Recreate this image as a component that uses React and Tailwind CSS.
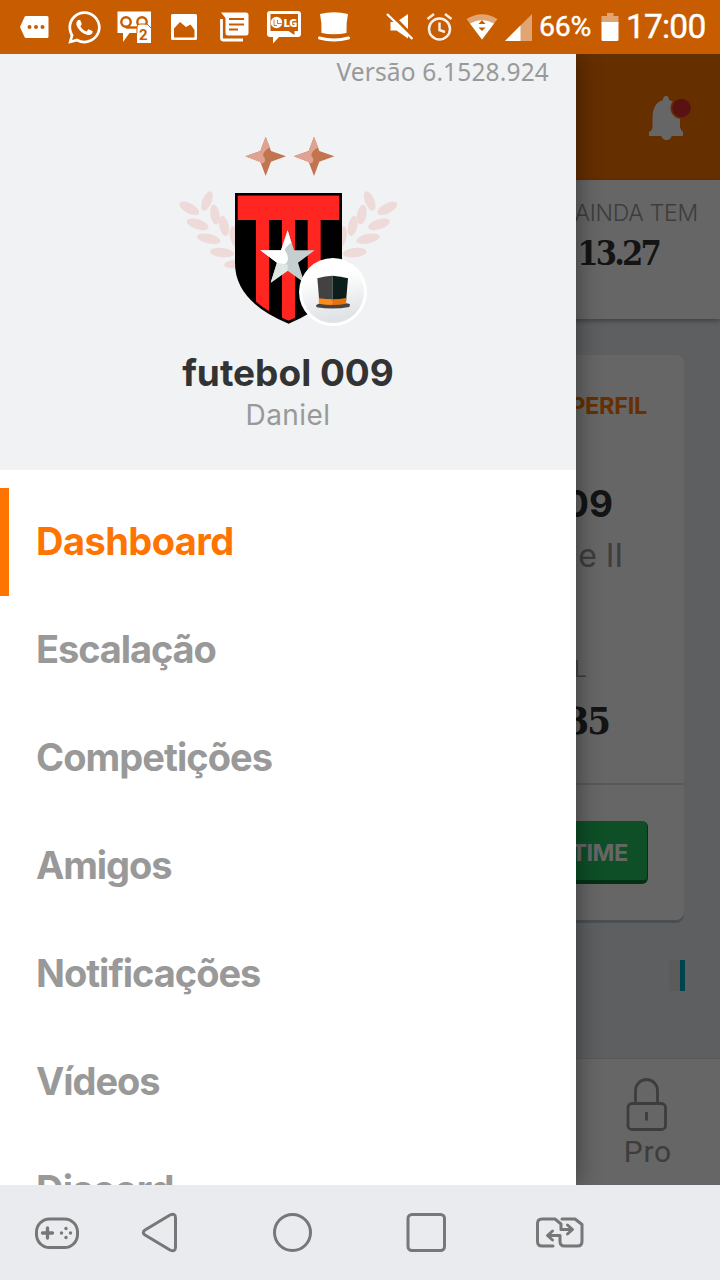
import { FaWhatsapp } from "react-icons/fa";

const ui = "font-['Inter','Liberation_Sans',sans-serif]";

function Glyph({ x, w, y = 0, h = 54, className = "", children }) {
  return (
    <svg width={w} height={h} viewBox={`${x} ${y} ${w} ${h}`} className={`block shrink-0 ${className}`} fill="#fff">
      {children}
    </svg>
  );
}

function StatusBar() {
  return (
    <div className="flex h-[54px] shrink-0 items-center overflow-hidden bg-[#c85c00] pl-5 font-[Roboto,sans-serif] text-white">
      <Glyph x={20} w={29}>
        <path fillRule="evenodd" d="M26 16h21q1.500 0 1.500 1.500v19q0 1.500-1.500 1.500H26q-1 0-1.500-1L20 27l4.500-10q.5-1 1.500-1zM29.500 25a2 2 0 100 4 2 2 0 000-4zm6.500 0a2 2 0 100 4 2 2 0 000-4zm6.500 0a2 2 0 100 4 2 2 0 000-4z" />
      </Glyph>
      <FaWhatsapp className="ml-[17px] size-[37px] shrink-0" />
      <Glyph x={117} w={35} className="ml-[14px]">
        <path d="M117.500 11.500h33.500V43h-14V33h-7.500L123 42v-9h-5.500z" />
        <g fill="none" stroke="#c85c00" strokeWidth="2.400">
          <circle cx="126" cy="22" r="4.700" />
          <circle cx="142" cy="22" r="4.700" />
          <path d="M126 27.500h11" />
        </g>
        <path d="M139 24.500h8l4 4V43h-14V26.500q0-2 2-2z" />
        <path d="M137 33V27q0-3 3-3h7l4 4" fill="none" stroke="#c85c00" strokeWidth="1" />
        <text x="139" y="39.500" fontSize="15" fontWeight="700" fill="#c85c00">2</text>
      </Glyph>
      <Glyph x={171} w={27} className="ml-[19px]">
        <path fillRule="evenodd" d="M172.500 14h23q1.500 0 1.500 1.500v23q0 1.500-1.500 1.500h-23q-1.500 0-1.500-1.500v-23q0-1.500 1.500-1.500zM174 37.500h20.500V30l-4-5.500-4.500 2.500-6-5-6 6.500z" />
      </Glyph>
      <Glyph x={219} w={31} className="ml-[21px]">
        <path d="M221 12.500h25q2.500 0 2.500 2.500v18q0 2.500-2.500 2.500h-18q-2.500 0-2.500-2.500V18z" />
        <path d="M221.500 19v19q0 2 2 2h19.500" fill="none" stroke="#fff" strokeWidth="2.800" />
        <path d="M229 19h15M229 24.500h15M229 29.500h9" stroke="#c85c00" strokeWidth="2.200" />
      </Glyph>
      <Glyph x={267} w={35} className="ml-[17px]">
        <path d="M270 11h28q3 0 3 3v20q0 3-3 3h-19l-6 6.500V37h-3q-3 0-3-3V14q0-3 3-3z" />
        <path d="M270.500 14h27.500v17h-3.500v4l-6-4h-18z" fill="#c85c00" />
        <circle cx="276.500" cy="22.500" r="5.700" />
        <path d="M274 19.500v6h3M277.500 20v3.500h4" stroke="#c85c00" strokeWidth=".8" fill="none" />
        <text x="283.500" y="26.500" fontSize="11" fontWeight="800" fontFamily="Open Sans" textLength="14">LG</text>
      </Glyph>
      <Glyph x={318} w={32} className="ml-4">
        <path d="M320 14q14-3.500 28 0-2 9-1.500 19-12.500 2.500-25 0Q322 23 320 14z" />
        <path d="M319.500 38q14.500 4 29 0" fill="none" stroke="#fff" strokeWidth="3" strokeLinecap="round" />
      </Glyph>
      <Glyph x={386} w={28} className="ml-9">
        <path d="M390.500 22h6l11.500-8v24.500l-11.500-8h-6z" />
        <path d="M389 12l25 25.500" stroke="#c85c00" strokeWidth="3" />
        <path d="M387 14l25.500 25" stroke="#fff" strokeWidth="2.400" />
      </Glyph>
      <Glyph x={426} w={28} className="ml-3">
        <g fill="none" stroke="#fff" strokeWidth="2.500" opacity=".9">
          <circle cx="439.500" cy="29" r="10.500" />
          <path d="M427.500 19l6.500-5M451.500 19l-6.500-5M439.500 22.500v7.500l5.500 2" />
        </g>
      </Glyph>
      <Glyph x={466} w={32} className="ml-3">
        <path d="M466.500 19q15.500-9.500 31 0L482 39.500z" opacity=".45" />
        <path d="M470 23.500q12-7 24 0L482 39.500z" />
        <path d="M478.500 24l3.500-4 3.500 4zM478.500 27.500h7l-3.500 3.500z" fill="#c85c00" />
      </Glyph>
      <Glyph x={505} w={28} className="ml-[7px]">
        <path d="M505 41l27-27v27z" opacity=".45" />
        <path d="M505 41l15.500-15.500V41z" />
      </Glyph>
      <span className="ml-[6px] w-[60px] text-[28.500px] leading-[56px] tracking-[-0.3px] [-webkit-text-stroke:0.4px_#fff]">66%</span>
      <Glyph x={600} w={20} className="ml-[1px]">
        <path d="M607 13h6.500v3h5v7h-17v-7h5.500z" opacity=".45" />
        <path d="M601.500 22h17v17.500q0 1.500-1.500 1.500h-14q-1.500 0-1.500-1.500z" />
      </Glyph>
      <span className="ml-[6px] text-[33.500px] leading-[56px] tracking-[-0.8px] [-webkit-text-stroke:0.4px_#fff]">17:00</span>
    </div>
  );
}

function Leaves() {
  return (
    <g fill="#eedbd9">
      <ellipse cx="88" cy="265" rx="33" ry="15" transform="rotate(28 88 265)" />
      <ellipse cx="141" cy="243" rx="31" ry="14" transform="rotate(-68 141 243)" />
      <ellipse cx="113" cy="313" rx="34" ry="15" transform="rotate(18 113 313)" />
      <ellipse cx="165" cy="284" rx="30" ry="14" transform="rotate(-100 165 284)" />
      <ellipse cx="146" cy="356" rx="36" ry="14" transform="rotate(12 146 356)" />
      <ellipse cx="192" cy="318" rx="31" ry="14" transform="rotate(78 192 318)" />
      <ellipse cx="186" cy="398" rx="36" ry="14" transform="rotate(6 186 398)" />
      <ellipse cx="224" cy="350" rx="32" ry="14" transform="rotate(80 224 350)" />
      <ellipse cx="226" cy="431" rx="34" ry="13" transform="rotate(-8 226 431)" />
    </g>
  );
}

function Spark() {
  return (
    <>
      <path d="M0-59L16-16 61 0 16 16 0 59-16 16-61 0-16-16z" fill="#c2744f" />
      <path d="M0-59L13-27Q-8-16-8-2 2 8-4 18-10 24-18 17L-61 0-16-16z" fill="#e0a293" />
    </>
  );
}

function Crest() {
  return (
    <svg width="260" height="220" viewBox="0 0 780 660" className="block shrink-0">
      <defs>
        <clipPath id="shield"><path d="M232 226H539V430Q535 540 386 602 232 540 232 430z" /></clipPath>
        <linearGradient id="disc" x1="0" y1="0" x2="0.200" y2="1">
          <stop offset=".3" stopColor="#fff" />
          <stop offset="1" stopColor="#dfe3e5" />
        </linearGradient>
      </defs>
      <g transform="translate(317 109)"><Spark /></g>
      <g transform="translate(462 109)"><Spark /></g>
      <Leaves />
      <g transform="translate(770 0) scale(-1 1)"><Leaves /></g>
      <path d="M225 219H546V430Q546 545 386 611 225 545 225 430z" />
      <g clipPath="url(#shield)" fill="#ff2622">
        <path d="M232 226h307v74H232z" />
        <path d="M288 290h39v320h-39zM366 290h39v320h-39zM443 290h39v320h-39z" />
      </g>
      <path d="M383 331L402 391H464L414 428 433 488 383 452 332 488 351 428 301 391H363z" fill="#c5cfd0" />
      <path d="M383 331L394 368Q378 378 374 390 390 412 380 428 372 436 351 430L332 488 351 428 301 391H363z" fill="#fff" />
      <path d="M351 428L383 434V452L332 488z" fill="#dfe6e6" />
      <circle cx="519" cy="516" r="102" fill="#fff" />
      <circle cx="519" cy="516" r="93" fill="url(#disc)" />
      <path d="M468 556Q478 548 486 550H552Q562 548 570 553L568 561Q519 570 470 562z" fill="#4a4440" />
      <path d="M472 475Q495 468 518 467V545H478z" fill="#424242" />
      <path d="M518 467Q542 469 564 475L558 545H518z" fill="#0b1e1c" />
      <path d="M476 535Q498 538 518 538V555Q496 555 477 551z" fill="#ff8a1c" />
      <path d="M518 538Q540 538 559 534L558 551Q540 555 518 555z" fill="#e87207" />
    </svg>
  );
}

const items = [
  { label: "Escalação", spacing: "tracking-[-1.1px]" },
  { label: "Competições", spacing: "tracking-[-0.95px]" },
  { label: "Amigos", spacing: "tracking-[-1.1px]" },
  { label: "Notificações", spacing: "tracking-[-1.02px]" },
  { label: "Vídeos", spacing: "tracking-[-1.05px]" },
  { label: "Discord", spacing: "tracking-[-0.8px]" },
];

function Drawer() {
  return (
    <aside className={`absolute inset-y-0 left-0 flex w-[576px] flex-col overflow-hidden bg-white shadow-[0_0_24px_rgba(0,0,0,0.45)] ${ui}`}>
      <div className="flex h-[416px] shrink-0 flex-col items-center bg-[#f0f2f4]">
        <div className="h-9 self-end pr-[27px] font-['Noto_Sans','Open_Sans',sans-serif] text-[24.500px] leading-9 tracking-[0.15px] text-[#999]">Versão 6.1528.924</div>
        <div className="mt-[30px] pl-1"><Crest /></div>
        <div className="mt-[9px] text-[37px] font-bold leading-[48px] text-[#333]">futebol 009</div>
        <div className="text-[28px] leading-9 tracking-[0.4px] text-[#999]">Daniel</div>
      </div>
      <nav className="flex flex-col pt-[18px] text-[38px] font-bold leading-[106px] text-[#999]">
        <div className="h-[108px] border-l-[9px] border-[#ff7400] pl-[27px] tracking-[-0.55px] text-[#ff7400]">Dashboard</div>
        {items.map(({ label, spacing }) => (
          <div key={label} className={`h-[108px] shrink-0 pl-9 ${spacing}`}>{label}</div>
        ))}
      </nav>
    </aside>
  );
}

const slab = "font-['DejaVu_Serif_Condensed','DejaVu_Serif',serif] font-bold text-[#333]";

function Dashboard() {
  return (
    <div className={`flex h-full flex-col bg-[#ebeef2] ${ui}`}>
      <header className="flex h-[126px] shrink-0 justify-end bg-[#ff7500] pr-[27px]">
        <Glyph x={648} y={54} w={45} h={126}>
          <g fill="#fff">
            <path d="M666 96q3 0 3 4 11 3 11 18v9q1 4 3 5v4h-34v-4q3-1 3.500-5v-9q0-15 10.500-18 0-4 3-4z" />
            <path d="M661 135h11q-1 5-5.500 5t-5.500-5z" />
          </g>
          <circle cx="681.500" cy="108" r="11" fill="#ff7500" />
          <circle cx="681.500" cy="108" r="9.300" fill="#e02c2c" />
        </Glyph>
      </header>
      <section className="flex h-[139px] shrink-0 flex-col items-end bg-white pt-[15px] shadow-[0_2px_5px_rgba(0,0,0,0.35)]">
        <div className="pr-[22px] text-[23px] font-light leading-9 tracking-[-0.25px] text-[#999]">AINDA TEM</div>
        <div className={`pr-[61px] text-[34px] leading-[44px] tracking-[-2.800px] ${slab}`}>13.27</div>
      </section>
      <section className="mt-9 mr-9 flex h-[565px] shrink-0 flex-col items-end rounded-lg bg-white shadow-[0_3px_0_#bfc5cc]">
        <div className="mt-[33px] pr-[37px] text-[23.500px] font-bold leading-9 tracking-[-0.3px] text-[#ff7900]">PERFIL</div>
        <div className="mt-[56px] pr-[71px] text-[37px] font-bold leading-[48px] text-[#333]">009</div>
        <div className="mt-[8px] pr-[61px] text-[32px] leading-10 text-[#999]">e II</div>
        <div className="mt-[75px] pr-[97px] text-[23px] font-light leading-9 text-[#999]">L</div>
        <div className={`mt-[12px] pr-[75px] text-[38px] leading-[44px] tracking-[-2px] ${slab}`}>35</div>
        <div className="mt-[40px] w-full border-t-2 border-[#dedede] pt-[36px] pr-9">
          <div className="ml-auto h-[63px] w-[260px] rounded-md border-r border-b-4 border-[#087a35] bg-[#25c663] pr-[19px] text-right text-[23.500px] font-bold leading-[63px] tracking-[-0.4px] text-white">TIME</div>
        </div>
      </section>
      <div className="mt-[40px] mr-[35px] h-[31px] w-4 self-end border-r-[5px] border-[#00a8bd] bg-[#e3e3e3]" />
      <footer className="mt-auto flex h-[127px] shrink-0 flex-col items-end border-t border-[#ddd] bg-white pt-[17px] text-[#999]">
        <Glyph x={626} y={1076} w={42} h={56} className="mr-[52px]">
          <g fill="none" stroke="#999" strokeWidth="2.800">
            <rect x="628" y="1103.500" width="37.500" height="26" rx="4" />
            <path d="M635.500 1103v-12.500a11 11 0 0122 0V1103M646.500 1112v8.500" />
          </g>
        </Glyph>
        <div className="mt-[2px] pr-[48px] font-[Roboto,sans-serif] text-[30px] leading-9 tracking-[0.8px]">Pro</div>
      </footer>
    </div>
  );
}

function SystemNav() {
  return (
    <div className="flex h-[95px] shrink-0 bg-[#e9ebee]">
      <svg width="720" height="95" viewBox="0 1185 720 95" className="block" fill="none" stroke="#777" strokeWidth="3" strokeLinecap="round" strokeLinejoin="round">
        <rect x="36.500" y="1219" width="41" height="28.500" rx="13" />
        <path d="M42.500 1233h10M47.500 1228v10" strokeWidth="3.300" />
        <g fill="#777" stroke="none">
          <circle cx="66" cy="1228.500" r="1.700" />
          <circle cx="66" cy="1237.500" r="1.700" />
          <circle cx="61.500" cy="1233" r="1.700" />
          <circle cx="70.500" cy="1233" r="1.700" />
        </g>
        <path d="M170 1215q5.500-2.500 5.500 3v29q0 5.500-5.500 3l-25-15q-3.500-2.500 0-5z" />
        <circle cx="292.500" cy="1232.500" r="18" />
        <rect x="408" y="1214.500" width="36.500" height="36" rx="4" />
        <path d="M553 1246h-11q-4.500 0-4.500-4.500v-18q0-4.500 4.500-4.500h13l6 5v5.500h11M567.500 1225l5 4.500-5 4.500M562 1219h13l7 5.500v17q0 4.500-4.500 4.500h-13q-4.500 0-4.500-4.500v-6h-12M552.500 1231l-5 4.500 5 4.500" />
      </svg>
    </div>
  );
}

export default function App() {
  return (
    <div className="flex h-[1280px] w-[720px] flex-col overflow-hidden">
      <StatusBar />
      <main className="relative h-[1131px] shrink-0 overflow-hidden">
        <Dashboard />
        <div className="absolute inset-0 bg-black/60" />
        <Drawer />
      </main>
      <SystemNav />
    </div>
  );
}
